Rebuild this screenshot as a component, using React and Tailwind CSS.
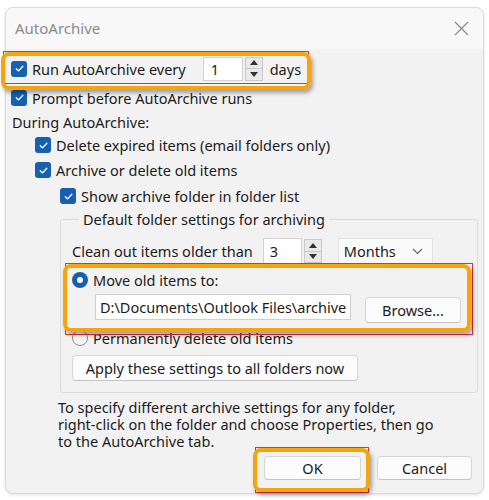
import React from "react";

function Check({ className = "" }) {
  return (
    <span className={"flex h-[16px] w-[16px] shrink-0 items-center justify-center rounded-[3px] bg-[#1560b0] " + className}>
      <svg width="11" height="11" viewBox="0 0 12 12" fill="none">
        <path d="M2.5 6.3 L5 8.6 L9.6 3.6" stroke="white" strokeWidth="1.5" strokeLinecap="round" strokeLinejoin="round" />
      </svg>
    </span>
  );
}

function Spin() {
  return (
    <span className="flex h-[24px] w-[18px] flex-col border border-[#c9c9c9] bg-[#e9e9e9]">
      <span className="flex flex-1 items-center justify-center border-b border-[#c9c9c9]">
        <svg width="8" height="5" viewBox="0 0 8 5"><path d="M0 5 L4 0 L8 5Z" fill="#333" /></svg>
      </span>
      <span className="flex flex-1 items-center justify-center">
        <svg width="8" height="5" viewBox="0 0 8 5"><path d="M0 0 L4 5 L8 0Z" fill="#333" /></svg>
      </span>
    </span>
  );
}

function Highlight({ cls, red }) {
  return (
    <>
      <div className={"pointer-events-none absolute border border-[#e8303a] " + red} />
      <div className={"pointer-events-none absolute rounded-[8px] border-[4px] border-[#f5a40c] shadow-[2px_3px_4px_rgba(0,0,0,0.35)] " + cls} />
    </>
  );
}

export default function App() {
  return (
    <div className="relative h-[500px] w-[489px] overflow-hidden bg-white text-[14.5px] text-[#1b1b1b]" style={{ fontFamily: '"Noto Sans", "Open Sans", sans-serif' }}>
      <div className="absolute left-[5px] top-[7px] flex h-[487px] w-[479px] flex-col overflow-hidden rounded-[8px] border border-[#dadada] bg-[#f2f2f2] shadow-[0_1px_3px_rgba(0,0,0,0.12)]">
        {/* title bar */}
        <div className="flex h-[41px] shrink-0 items-center justify-between bg-[#f8f8f8] pl-[9px] pr-[14px]">
          <span className="text-[15px] text-[#8a8a8a]">AutoArchive</span>
          <svg width="15" height="15" viewBox="0 0 15 15"><path d="M1 1 L14 14 M14 1 L1 14" stroke="#8a8a8a" strokeWidth="1.2" /></svg>
        </div>

        <div className="flex flex-col pl-[5px] pt-[5px] leading-[18px]">
          <div className="flex h-[29px] items-center gap-[5px]">
            <Check />
            <span>Run AutoArchive every</span>
            <span className="ml-[12px] flex h-[24px] w-[40px] items-center border border-[#d2d2d2] bg-white pl-[7px]">1</span>
            <span className="ml-[-3px]"><Spin /></span>
            <span className="ml-[2px]">days</span>
          </div>
          <div className="flex h-[29px] items-center gap-[5px]">
            <Check />
            <span>Prompt before AutoArchive runs</span>
          </div>
          <div className="flex h-[20px] items-center pl-[1px]">During AutoArchive:</div>
          <div className="flex h-[26px] items-center gap-[5px] pl-[24px]">
            <Check />
            <span>Delete expired items (email folders only)</span>
          </div>
          <div className="flex h-[24px] items-center gap-[5px] pl-[24px]">
            <Check />
            <span>Archive or delete old items</span>
          </div>
          <div className="flex h-[28px] items-center gap-[5px] pl-[49px]">
            <Check />
            <span>Show archive folder in folder list</span>
          </div>

          <fieldset className="ml-[49px] mr-[5px] mt-[-1px] h-[184px] rounded-[3px] border border-[#dcdcdc] pl-[11px]">
            <legend className="ml-[7px] px-[4px] leading-[20px]">Default folder settings for archiving</legend>
            <div className="mt-[9px] flex h-[26px] items-center">
              <span>Clean out items older than</span>
              <span className="ml-[10px] flex h-[26px] w-[39px] items-center border border-[#d2d2d2] bg-white pl-[6px]">3</span>
              <span className="ml-[2px]"><Spin /></span>
              <span className="ml-[16px] flex h-[26px] w-[95px] items-center justify-between border border-[#e2e2e2] bg-[#fafafa] pl-[5px] pr-[9px]">
                <span>Months</span>
                <svg width="11" height="7" viewBox="0 0 11 7"><path d="M1 1 L5.5 5.5 L10 1" stroke="#666" strokeWidth="1.1" fill="none" /></svg>
              </span>
            </div>
            <div className="mt-[4px] flex h-[24px] items-center gap-[5px]">
              <span className="flex h-[16px] w-[16px] items-center justify-center rounded-full bg-[#1560b0]">
                <span className="h-[6px] w-[6px] rounded-full bg-white" />
              </span>
              <span>Move old items to:</span>
            </div>
            <div className="mt-[2px] flex h-[28px] items-start pl-[23px]">
              <span className="flex h-[26px] w-[256px] items-center whitespace-nowrap border border-[#cfcfcf] bg-white pl-[4px]">D:\Documents\Outlook Files\archive</span>
              <span className="ml-[14px] mt-[3px] flex h-[26px] w-[96px] items-center justify-center rounded-[4px] border border-[#d6d6d6] border-b-[#c4c4c4] bg-[#fbfbfb]">Browse...</span>
            </div>
            <div className="mt-[6px] flex h-[20px] items-center gap-[5px]">
              <span className="h-[16px] w-[16px] rounded-full border border-[#8a8a8a] bg-[#f6f6f6]" />
              <span>Permanently delete old items</span>
            </div>
            <div className="mt-[7px] flex">
              <span className="flex h-[26px] w-[286px] items-center justify-center rounded-[4px] border border-[#d6d6d6] border-b-[#c4c4c4] bg-[#fbfbfb]">Apply these settings to all folders now</span>
            </div>
          </fieldset>

          <div className="ml-[47px] mt-[6px] leading-[17px]">
            To specify different archive settings for any folder,<br />
            right-click on the folder and choose Properties, then go<br />
            to the AutoArchive tab.
          </div>

          <div className="mr-[11px] mt-[6px] flex justify-end gap-[16px]">
            <span className="flex h-[24px] w-[97px] items-center justify-center rounded-[4px] border border-[#d6d6d6] border-b-[#c4c4c4] bg-[#fbfbfb]">OK</span>
            <span className="flex h-[24px] w-[95px] items-center justify-center rounded-[4px] border border-[#d6d6d6] border-b-[#c4c4c4] bg-[#fbfbfb]">Cancel</span>
          </div>
        </div>
      </div>

      <Highlight red="left-[3px] top-[51px] h-[33px] w-[306px]" cls="left-[1px] top-[52px] h-[38px] w-[310px]" />
      <Highlight red="left-[65px] top-[263px] h-[72px] w-[408px]" cls="left-[63px] top-[264px] h-[68px] w-[408px]" />
      <Highlight red="left-[255px] top-[447px] h-[46px] w-[114px]" cls="left-[253px] top-[448px] h-[44px] w-[117px]" />
    </div>
  );
}
